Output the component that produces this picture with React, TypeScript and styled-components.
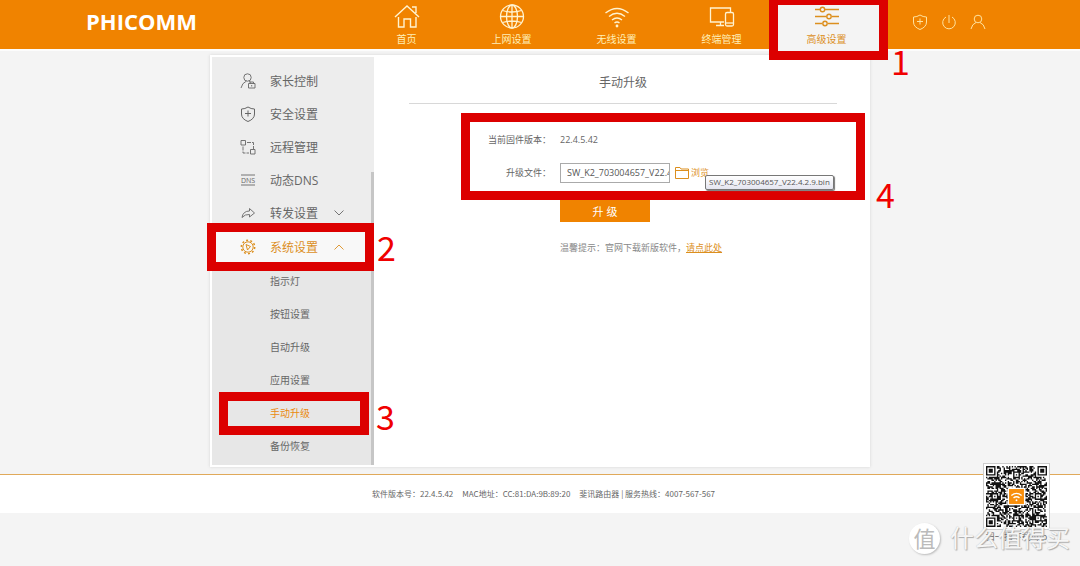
import React from 'react';
import styled, { createGlobalStyle, css } from 'styled-components';

const sans = '"Open Sans", "Noto Sans CJK SC", sans-serif';
const orange = '#f08300';
const gold = '#dc8f1e';
const red = '#dc0000';

const GlobalStyle = createGlobalStyle`
  * { box-sizing: border-box; }
  body {
    margin: 0;
    background: #f4f4f4;
    color: #666;
    font-family: ${sans};
    font-size: 9px;
  }
  button, input { font-family: inherit; }
  ul { list-style: none; margin: 0; padding: 0; }
  a { color: inherit; }
`;

const Page = styled.div`
  min-height: 100vh;
  overflow-x: hidden;
`;

const Header = styled.header`
  height: 49px;
  background: ${orange};
  box-shadow: 0 2px 0 #fcfcfc;
`;

const HeaderInner = styled.div`
  display: flex;
  max-width: 908px;
  height: 49px;
  margin: 0 auto;
`;

const Logo = styled.h1`
  width: 268px;
  margin: 0;
  font-size: 22px;
  line-height: 43px;
  font-weight: 700;
  color: #fff;
`;

const Nav = styled.nav`
  display: flex;
`;

const NavItem = styled.a<{ $active?: boolean }>`
  position: relative;
  display: flex;
  flex-direction: column;
  align-items: center;
  gap: 2px;
  width: 105px;
  height: 51px;
  padding-top: 3px;
  font-size: 10px;
  line-height: 16px;
  text-decoration: none;
  color: ${(p) => (p.$active ? gold : '#fff0b8')};
  ${(p) => p.$active && css`background: #f4f4f4;`}
  svg { display: block; stroke: ${(p) => (p.$active ? gold : '#fff3d0')}; }
`;

const Tools = styled.div`
  display: flex;
  align-items: center;
  gap: 13px;
  height: 44px;
  margin-left: 33px;
`;

const IconButton = styled.button`
  display: flex;
  padding: 0;
  border: 0;
  background: none;
  color: #ffe3a0;
`;

const Frame = styled.span<{ $inset: string }>`
  position: absolute;
  z-index: 2;
  inset: ${(p) => p.$inset};
  border: 9px solid ${red};
  pointer-events: none;
`;

const Step = styled.span<{ $left: number; $top: number }>`
  position: absolute;
  left: calc(100% + ${(p) => p.$left}px);
  top: ${(p) => p.$top}px;
  font-family: "Noto Sans CJK SC", sans-serif;
  font-size: 34px;
  line-height: 34px;
  color: #f00000;
`;

const Panel = styled.main`
  display: flex;
  max-width: 660px;
  margin: 6px auto 0;
  border: 2px solid #fff;
  background: #fff;
  box-shadow: 0 0 3px #d4d4d4;
`;

const Sidebar = styled.aside`
  display: flex;
  flex: none;
  width: 162px;
  background: #ededed;
`;

const Menu = styled.ul`
  flex: 1;
  padding-top: 7px;
`;

const MenuLink = styled.a<{ $active?: boolean }>`
  position: relative;
  display: flex;
  align-items: center;
  height: ${(p) => (p.$active ? 35 : 33)}px;
  padding-left: 28px;
  font-size: 12px;
  text-decoration: none;
  color: ${(p) => (p.$active ? gold : '#666')};
  ${(p) => p.$active && css`background: #f8f8f8;`}
`;

const MenuLabel = styled.span`
  width: 64px;
  margin-left: 14px;
`;

const SubMenu = styled.ul`
  padding-bottom: 3px;
  background: #e7e7e7;
`;

const SubLink = styled.a<{ $active?: boolean }>`
  position: relative;
  display: flex;
  align-items: center;
  height: 33px;
  padding-left: 58px;
  font-size: 10px;
  text-decoration: none;
  color: ${(p) => (p.$active ? '#ea8a10' : '#666')};
`;

const ScrollTrack = styled.div`
  width: 3px;
  padding-top: 115px;
`;

const ScrollThumb = styled.div`
  height: 100%;
  background: #c6c6c6;
`;

const Content = styled.section`
  flex: 1;
  padding: 0 31px 0 35px;
`;

const Title = styled.h2`
  height: 47px;
  margin: 0 0 9px;
  border-bottom: 1px solid #d8d8d8;
  font-size: 12px;
  line-height: 52px;
  font-weight: 400;
  text-align: center;
`;

const Form = styled.form`
  margin: 0 -28px 0 52px;
`;

const Fields = styled.div`
  position: relative;
  display: grid;
  grid-template-columns: 90px 1fr;
  column-gap: 9px;
  grid-auto-rows: 33px;
  align-items: center;
  height: 87px;
  padding-top: 10px;
`;

const Label = styled.label`
  text-align: right;
`;

const FileRow = styled.div`
  position: relative;
  display: flex;
  align-items: center;
`;

const FileInput = styled.input`
  width: 110px;
  height: 20px;
  margin-right: 5px;
  padding: 0 0 0 6px;
  border: 1px solid #aaa;
  background: #fff;
  font-size: 9px;
  color: #555;
`;

const Browse = styled.button`
  display: flex;
  align-items: center;
  gap: 2px;
  padding: 0;
  border: 0;
  background: none;
  font-size: 9px;
  color: ${gold};
`;

const Tooltip = styled.span`
  position: absolute;
  z-index: 3;
  left: 145px;
  top: 12px;
  height: 15px;
  padding: 0 3px;
  border: 1px solid #777;
  border-radius: 2px;
  background: linear-gradient(#fff, #e4e5f0);
  box-shadow: 1px 1px 1px #777;
  font-size: 8px;
  line-height: 12px;
  white-space: nowrap;
  color: #555;
`;

const Submit = styled.button`
  display: block;
  width: 90px;
  height: 22px;
  margin: 0 0 0 99px;
  padding: 0;
  border: 0;
  background: ${orange};
  font-size: 11px;
  color: #fff;
`;

const Hint = styled.p`
  margin: 19px 0 0 99px;
  line-height: 14px;
  color: #888;
  a { color: ${gold}; }
`;

const Footer = styled.footer`
  position: relative;
  height: 39px;
  margin-top: 7px;
  border-top: 1px solid #e0a95a;
  background: #fff;
`;

const FooterInfo = styled.div`
  display: flex;
  justify-content: center;
  gap: 9px;
  padding-left: 7px;
  font-family: "Noto Sans CJK SC", sans-serif;
  font-size: 8px;
  line-height: 37px;
`;

const QrBox = styled.figure`
  position: absolute;
  right: 30px;
  top: -12px;
  width: 67px;
  margin: 0;
  text-align: center;
  line-height: 14px;
  white-space: nowrap;
  svg { display: block; border: 1px solid #ccc; background: #fff; }
`;

const Watermark = styled.div`
  position: absolute;
  z-index: 4;
  right: 10px;
  top: 47px;
  display: flex;
  align-items: center;
  gap: 10px;
  font-size: 24px;
  line-height: 32px;
  color: #f6f6f6;
  text-shadow: 1px 1px 1px #aaa, 0 0 1px #bbb;
`;

const Badge = styled.span`
  width: 31px;
  height: 31px;
  border-radius: 50%;
  background: #fff;
  box-shadow: 1px 1px 2px #bbb;
  font-size: 22px;
  line-height: 30px;
  text-align: center;
  color: #bbb;
  text-shadow: none;
`;

const Svg = ({ w, h = w, box, sw = 1, children }: { w: number; h?: number; box: string; sw?: number; children: React.ReactNode }) => (
  <svg width={w} height={h} viewBox={box} fill="none" stroke="currentColor" strokeWidth={sw} aria-hidden="true">{children}</svg>
);

const HomeIcon = () => (
  <Svg w={26} box="0 0 26 26" sw={1.4}>
    <path d="M1 14 13 3l12 11M18 4h4v6M4.500 14v10h5.500v-8h6.500v8h5.500V14" />
  </Svg>
);
const GlobeIcon = () => (
  <Svg w={26} box="0 0 26 26" sw={1.3}>
    <circle cx="13" cy="13.500" r="11.500" />
    <ellipse cx="13" cy="13.500" rx="5.500" ry="11.500" />
    <path d="M13 2v23M1.500 13.500h23M3.500 7.500q9.500 3 19 0M3.500 19.500q9.500-3 19 0" />
  </Svg>
);
const WifiIcon = () => (
  <Svg w={26} box="0 0 26 26" sw={1.4}>
    <path d="M1.500 10q11.500-9 23 0M5 13.500q8-6.500 16 0M8 17q5-4 10 0M10.500 20q2.500-2 5 0" />
    <circle cx="13" cy="23" r=".7" />
  </Svg>
);
const DeviceIcon = () => (
  <Svg w={26} box="0 0 26 26" sw={1.3}>
    <path d="M15 19H1.500V5h20v4M11.500 19v3M7 22.500h8" />
    <rect x="16.500" y="9.500" width="8" height="13.500" rx="1.500" />
    <path d="M17 20h7" />
  </Svg>
);
const SlidersIcon = () => (
  <Svg w={26} box="0 0 26 26" sw={1.4}>
    <path d="M1 6.500h5M11 6.500H25M1 13.500h11.500M18 13.500h7M1 20.500h7M14 20.500H25" />
    <circle cx="8.500" cy="6.500" r="2.200" /><circle cx="15" cy="13.500" r="2.200" /><circle cx="11" cy="20.500" r="2.200" />
  </Svg>
);
const ShieldIcon = () => (
  <Svg w={16} box="0 0 16 16">
    <path d="M8 1Q5 3 1.500 3v5q0 5 6.500 7.500Q14.500 13 14.500 8V3Q11 3 8 1zM8 4.500v6M5 7.500h6" />
  </Svg>
);
const PowerIcon = () => (
  <Svg w={16} box="0 0 16 16">
    <path d="M5 3a6.300 6.300 0 1 0 6 0M8 1v8" />
  </Svg>
);
const UserIcon = () => (
  <Svg w={16} box="0 0 16 16">
    <circle cx="8" cy="5" r="3.800" /><path d="M1 15q1-5 5-6.500M15 15q-1-5-5-6.500" />
  </Svg>
);
const ParentIcon = () => (
  <Svg w={16} box="0 0 16 16" sw={0.9}>
    <circle cx="7.500" cy="4.500" r="3.700" /><path d="M1 15q1-5 5.500-7M9 8l1.500 1" /><path d="M8.500 10.500h6.500v4.500h-6.500zM10 10.500V9h3.500v1.500M11.700 12v1.500" />
  </Svg>
);
const RemoteIcon = () => (
  <Svg w={16} box="0 0 16 16" sw={0.9}>
    <path d="M1 1.500h4.500V6H1zM10.500 10.500H15V15h-4.500z" /><path d="M7 3.500h6.500V10M3 7.500V14h6" strokeDasharray="4 1" />
  </Svg>
);
const DnsIcon = () => (
  <Svg w={16} box="0 0 16 16" sw={0.9}>
    <path d="M1 3h14M1 13h14" />
    <text x="8" y="10.500" textAnchor="middle" fontSize="7" fill="currentColor" stroke="none">DNS</text>
  </Svg>
);
const ForwardIcon = () => (
  <Svg w={16} box="0 0 16 16" sw={0.9}>
    <path d="M2 12.500Q3 6 9.500 6V3.500L14.500 8l-5 4V9.500Q5 9 2 12.500z" />
  </Svg>
);
const GearIcon = () => (
  <Svg w={16} box="0 0 16 16">
    <circle cx="8" cy="8" r="5.200" /><circle cx="8" cy="8" r="6.700" strokeWidth="1.500" strokeDasharray="2 2.210" />
    <path d="M6 5.500l4.500 2L7.500 11z" />
  </Svg>
);
const Chevron = ({ up }: { up?: boolean }) => (
  <Svg w={10} h={6} box="0 0 10 6" sw={0.9}>
    <path d={up ? 'M.5 5.500 5 1l4.500 4.500' : 'M.5.5 5 5 9.500.5'} />
  </Svg>
);
const FolderIcon = () => (
  <Svg w={14} box="0 0 14 14">
    <path d="M.5 12.500v-11h4.500l1 1.500h7.500v9.500zM.5 4.500h12.500" />
  </Svg>
);

const SIZE = 45;
const ANCHORS = [6, 22, 38];
function moduleOn(x: number, y: number) {
  const corners = [[3, 3], [SIZE - 4, 3], [3, SIZE - 4]];
  for (const [cx, cy] of corners) {
    const d = Math.max(Math.abs(x - cx), Math.abs(y - cy));
    if (d <= 4) return d === 3 || d <= 1;
  }
  for (const cx of ANCHORS) {
    for (const cy of ANCHORS) {
      const d = Math.max(Math.abs(x - cx), Math.abs(y - cy));
      if (d <= 2) return d !== 1;
    }
  }
  const n = Math.sin(x * 12.9898 + y * 78.233) * 43758.5453;
  return n - Math.floor(n) < 0.56;
}
const qrPath = Array.from({ length: SIZE * SIZE }, (_, i) => [i % SIZE, Math.floor(i / SIZE)])
  .filter(([x, y]) => moduleOn(x, y))
  .map(([x, y]) => `M${x} ${y}h1v1h-1z`)
  .join('');

const QrCode = () => (
  <svg width="67" height="67" viewBox="-1.500 -1.500 48 48" role="img" aria-label="QR">
    <path d={qrPath} fill="#111" />
    <rect x="16" y="16" width="13" height="13" rx="1" fill="#fff" />
    <rect x="17" y="17" width="11" height="11" fill="#f88f0c" />
    <path d="M18.700 21.800q3.800-3.200 7.600 0M20.300 23.500q2.200-1.700 4.400 0" fill="none" stroke="#fff" strokeWidth="1" />
    <circle cx="22.500" cy="25.300" r=".7" fill="#fff" />
  </svg>
);

const navItems = [
  { label: '首页', icon: <HomeIcon /> },
  { label: '上网设置', icon: <GlobeIcon /> },
  { label: '无线设置', icon: <WifiIcon /> },
  { label: '终端管理', icon: <DeviceIcon /> },
];
const menuItems = [
  { label: '家长控制', icon: <ParentIcon /> },
  { label: '安全设置', icon: <ShieldIcon /> },
  { label: '远程管理', icon: <RemoteIcon /> },
  { label: '动态DNS', icon: <DnsIcon /> },
  { label: '转发设置', icon: <ForwardIcon />, more: true },
];
const subItems = ['指示灯', '按钮设置', '自动升级', '应用设置', '手动升级', '备份恢复'];

export default function App() {
  return (
    <Page>
      <GlobalStyle />
      <Header>
        <HeaderInner>
          <Logo>PHICOMM</Logo>
          <Nav>
            {navItems.map((n) => (
              <NavItem key={n.label} href="#">{n.icon}{n.label}</NavItem>
            ))}
            <NavItem href="#" $active>
              <SlidersIcon />高级设置
              <Frame $inset="-4px -9px -9px -5px"><Step $left={12} $top={39}>1</Step></Frame>
            </NavItem>
          </Nav>
          <Tools>
            <IconButton aria-label="安全"><ShieldIcon /></IconButton>
            <IconButton aria-label="退出"><PowerIcon /></IconButton>
            <IconButton aria-label="用户"><UserIcon /></IconButton>
          </Tools>
        </HeaderInner>
      </Header>
      <Panel>
        <Sidebar>
          <Menu>
            {menuItems.map((m) => (
              <li key={m.label}>
                <MenuLink href="#">{m.icon}<MenuLabel>{m.label}</MenuLabel>{m.more && <Chevron />}</MenuLink>
              </li>
            ))}
            <li>
              <MenuLink href="#" $active>
                <GearIcon /><MenuLabel>系统设置</MenuLabel><Chevron up />
                <Frame $inset="-6px -3px -7px -5px"><Step $left={12} $top={-2}>2</Step></Frame>
              </MenuLink>
              <SubMenu>
                {subItems.map((s) => (
                  <li key={s}>
                    <SubLink href="#" $active={s === '手动升级'}>
                      {s}
                      {s === '手动升级' && <Frame $inset="-4px 2px -6px 7px"><Step $left={16} $top={-2}>3</Step></Frame>}
                    </SubLink>
                  </li>
                ))}
              </SubMenu>
            </li>
          </Menu>
          <ScrollTrack><ScrollThumb /></ScrollTrack>
        </Sidebar>
        <Content>
          <Title>手动升级</Title>
          <Form onSubmit={(e) => e.preventDefault()}>
            <Fields>
              <Label htmlFor="version">当前固件版本：</Label>
              <output id="version">22.4.5.42</output>
              <Label htmlFor="file">升级文件：</Label>
              <FileRow>
                <FileInput id="file" readOnly defaultValue="SW_K2_703004657_V22.4.2.9.bin" />
                <Browse type="button"><FolderIcon />浏览</Browse>
                <Tooltip role="tooltip">SW_K2_703004657_V22.4.2.9.bin</Tooltip>
              </FileRow>
              <Frame $inset="0"><Step $left={20} $top={55}>4</Step></Frame>
            </Fields>
            <Submit>升 级</Submit>
            <Hint>温馨提示：官网下载新版软件，<a href="#">请点此处</a></Hint>
          </Form>
        </Content>
      </Panel>
      <Footer>
        <FooterInfo>
          <span>软件版本号：22.4.5.42</span>
          <span>MAC地址：CC:81:DA:9B:89:20</span>
          <span>斐讯路由器 | 服务热线：4007-567-567</span>
        </FooterInfo>
        <QrBox><QrCode /><figcaption>扫一扫下载App</figcaption></QrBox>
        <Watermark><Badge>值</Badge>什么值得买</Watermark>
      </Footer>
    </Page>
  );
}
